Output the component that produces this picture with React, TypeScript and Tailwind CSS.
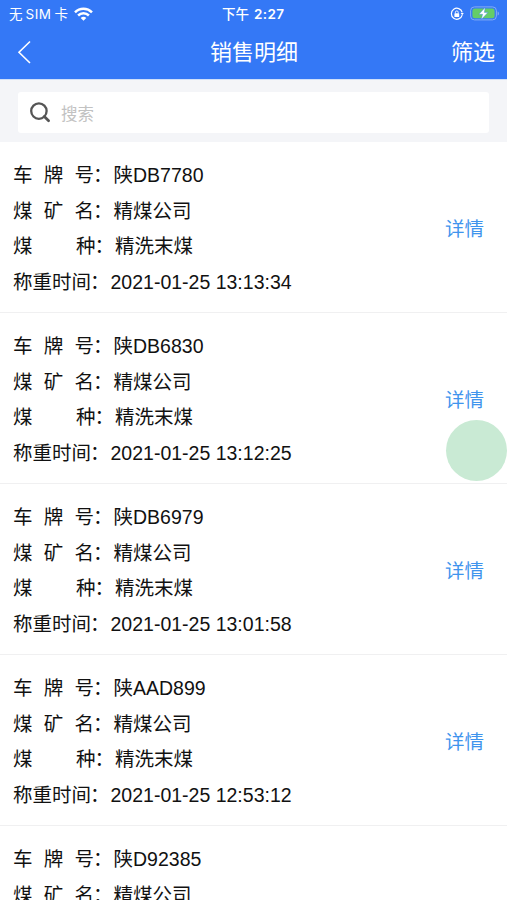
const records = [
  { plate: '陕DB7780', time: '2021-01-25 13:13:34' },
  { plate: '陕DB6830', time: '2021-01-25 13:12:25' },
  { plate: '陕DB6979', time: '2021-01-25 13:01:58' },
  { plate: '陕AAD899', time: '2021-01-25 12:53:12' },
];

function StatusBar() {
  return (
    <div className="relative flex h-[27px] items-center justify-between pl-[9px] pr-[7px] font-['Inter','Noto_Sans_CJK_SC',sans-serif] text-[13.5px]">
      <div className="flex items-center">
        <span className="flex pt-px">
          <span>无</span>
          <span className="ml-[3px] tracking-[0.5px]">SIM</span>
          <span className="ml-[3px]">卡</span>
        </span>
        <svg className="ml-[6px]" width="19" height="14" viewBox="0 0 19 14" fill="none" stroke="white" strokeWidth="2.5">
          <path d="M1 5.3C5.7.7 13.3.7 18 5.3" />
          <path d="M4.1 8.5C7.1 5.6 11.9 5.6 14.9 8.5" />
          <path d="M9.5 13.7 6.7 10.9C8.2 9.5 10.8 9.5 12.3 10.9Z" fill="white" stroke="none" />
        </svg>
      </div>
      <span className="absolute left-[222px] top-[4px] flex whitespace-nowrap font-semibold">
        <span className="font-medium">下午</span>
        <span className="ml-[5px] tracking-[0.4px]">2:27</span>
      </span>
      <div className="flex items-center gap-[6px]">
        <svg width="14" height="14" viewBox="0 0 14 14" fill="none" stroke="white">
          <path d="M12.2 8.2A5.5 5.5 0 1 1 12.2 5.3" strokeWidth="1.2" />
          <path d="M10.6 6h3.2l-1.6 2.3Z" fill="white" stroke="none" />
          <rect x="4.4" y="6.3" width="4.8" height="3.7" rx=".6" fill="white" stroke="none" />
          <path d="M5.4 6.5V5.3a1.4 1.4 0 0 1 2.8 0v1.2" strokeWidth=".9" />
        </svg>
        <svg width="30" height="15" viewBox="0 0 30 15">
          <rect x=".6" y=".9" width="25.8" height="13" rx="3.8" fill="none" stroke="#85acf4" />
          <rect x="2.4" y="2.6" width="22.2" height="9.6" rx="2.3" fill="#65cd68" />
          <path d="M27.6 5.4c1.8.5 1.8 3.6 0 4.1Z" fill="#85acf4" />
          <path d="M15.2 1.4 8.9 8.3h3.7l-1.3 5.3 6.6-7.2h-3.6Z" fill="white" stroke="#3478f6" strokeWidth=".4" />
        </svg>
      </div>
    </div>
  );
}

function Label({ chars }: { chars: string }) {
  const width = chars.length === 4 ? 'w-[78px]' : chars.length === 3 ? 'w-[81px]' : 'w-[82.5px]';
  return (
    <span className="flex">
      <span className={`flex justify-between ${width}`}>
        {chars.split('').map((c) => (
          <span key={c}>{c}</span>
        ))}
      </span>
      <span className="-ml-px mr-px">：</span>
    </span>
  );
}

function Row({ label, value }: { label: string; value: string }) {
  return (
    <div className="flex h-[35.5px] items-center whitespace-nowrap">
      <Label chars={label} />
      <span>{value}</span>
    </div>
  );
}

export default function App() {
  return (
    <div className="relative h-[900px] w-full overflow-hidden bg-white font-['Liberation_Sans','Noto_Sans_CJK_SC',sans-serif] text-[19.5px] text-[#111]">
      <header className="h-[79px] bg-[#3478f6] text-white">
        <StatusBar />
        <div className="grid h-[50px] grid-cols-3 items-center pl-[16px] pr-[12px] text-[22px]">
          <svg className="ml-px" width="15" height="24" viewBox="0 0 15 24" fill="none" stroke="white" strokeWidth="1.6">
            <path d="M13 1.5 2 12.3 13 23" />
          </svg>
          <span className="-ml-[3px] text-center">销售明细</span>
          <span className="text-right">筛选</span>
        </div>
      </header>
      <div className="h-[63px] border-t border-[#cfe0fa] bg-[#f4f5f8] px-[18px] pt-3">
        <div className="flex h-[41px] items-center rounded-[3px] bg-white pl-[11px]">
          <svg width="22" height="22" viewBox="0 0 22 22" fill="none" stroke="#555" strokeWidth="2.3">
            <circle cx="9.9" cy="9.1" r="7.7" />
            <path d="m15.3 14.5 4.3 4.3" strokeWidth="2.7" strokeLinecap="round" />
          </svg>
          <span className="ml-[10px] pt-[3px] text-[16.5px] text-[#c2c2c2]">搜索</span>
        </div>
      </div>
      <main>
        {records.map((r) => (
          <div key={r.plate} className="flex h-[171px] items-center justify-between border-b border-[#f0f0f1] pl-[13px] pr-[23px] pt-[4px]">
            <div>
              <Row label="车牌号" value={r.plate} />
              <Row label="煤矿名" value="精煤公司" />
              <Row label="煤种" value="精洗末煤" />
              <Row label="称重时间" value={r.time} />
            </div>
            <span className="pt-[2px] text-[#3f94ed]">详情</span>
          </div>
        ))}
        <div className="pl-[13px] pt-[16px]">
          <Row label="车牌号" value="陕D92385" />
          <Row label="煤矿名" value="精煤公司" />
        </div>
      </main>
      <div className="absolute left-[446px] top-[420px] size-[61px] rounded-full bg-[#c9ead4]" />
    </div>
  );
}
